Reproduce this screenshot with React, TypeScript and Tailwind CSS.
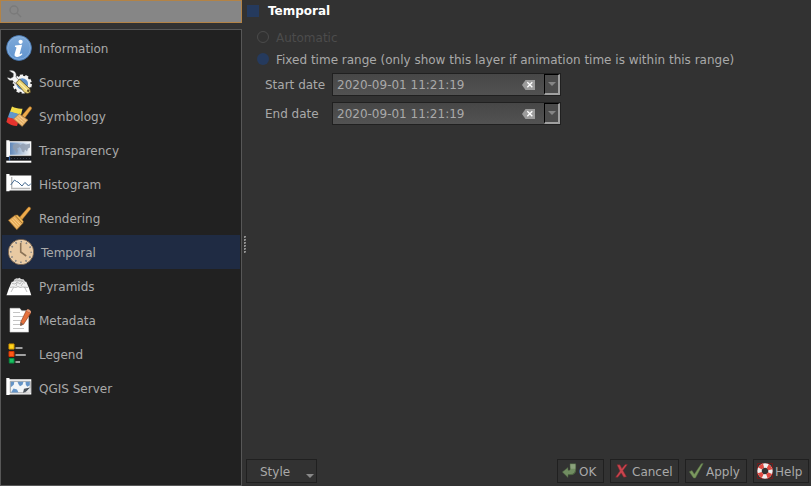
import React from "react";

function InfoIcon() {
  return (
    <svg width="26" height="26" viewBox="0 0 26 26">
      <defs>
        <linearGradient id="info" x1="0" y1="0" x2="0" y2="1">
          <stop offset="0" stopColor="#80abd9" />
          <stop offset="1" stopColor="#5f93cf" />
        </linearGradient>
      </defs>
      <circle cx="13" cy="13" r="12.4" fill="url(#info)" stroke="#4a79b3" strokeWidth="0.9" />
      <circle cx="13" cy="13" r="11.3" fill="none" stroke="#8fb6e0" strokeWidth="0.7" />
      <circle cx="14.600" cy="6.800" r="2.1" fill="#fff" />
      <path d="M9.200 10.600l6.900-.9-2.400 9c-.2 1 .8.6 2.200-.4l.5 1c-2 2.100-4 2.900-5.700 2.700-1.900-.2-2.500-1.500-2-3.200l1.700-5.800c.2-1-.4-1.100-1.600-1.100z" fill="#fff" />
    </svg>
  );
}

function SourceIcon() {
  return (
    <svg width="26" height="26" viewBox="0 0 26 26">
      <circle cx="16.300" cy="15" r="7" fill="#5c8fc8" stroke="#f5f5f5" strokeWidth="2.400" />
      <circle cx="16.300" cy="15" r="8.400" fill="none" stroke="#f5f5f5" strokeWidth="2.400" strokeDasharray="3.200 2.078" />
      <path d="M3 1.700c3-1.300 6.700.4 7.200 3.400.2 1.300 0 2.300-.3 3l4.500 4.300-3.500 3.600-4.500-4.400C4 12.300 1.500 10.600 1.200 8.200l3.400 1.100 2.500-1.500.2-3.200z" fill="#f6f6f6" stroke="#363636" strokeWidth="0.5" />
      <path d="M10 13.800l3.600-3.700 10.200 9.600.7 3.600-2.900 1.300-2.600-.8z" fill="#ead476" stroke="#584923" strokeWidth="0.8" />
      <path d="M13.200 13.600l7.800 7.500" stroke="#fff0ad" strokeWidth="1.200" />
      <circle cx="22.200" cy="21.800" r="1.200" fill="#51441f" />
    </svg>
  );
}

function SymbologyIcon() {
  return (
    <svg width="26" height="26" viewBox="0 0 26 26">
      <path d="M6 3.500c3.500 1.500 6 2.500 10.500 2.200L15 12 4 9z" fill="#f3dc4a" />
      <path d="M4 8.500l10.500 3-2 6L1.800 14.500z" fill="#5f97cd" />
      <path d="M1.800 14.200l11 3-1.800 5.800c-4 0-7.500-1.500-10.600-4z" fill="#e6332d" />
      <path d="M16 12.500L23 4.200c1.300-1.300 3.500.2 2.400 1.900l-6.600 8.800z" fill="#eeab4b" stroke="#a46b22" strokeWidth="0.5" />
      <path d="M7.500 16l5.700-5.300 8.800 6.300-5.800 6.500z" fill="#e9b36a" stroke="#9d7038" strokeWidth="0.5" />
      <path d="M9.500 15.500l7 6M11.300 14l7 5.800M13 12.500l7 5.600" stroke="#fad79a" strokeWidth="0.8" />
    </svg>
  );
}

function RenderingIcon() {
  return (
    <svg width="26" height="26" viewBox="0 0 26 26">
      <path d="M13.400 12.400L22 2.600c1.300-1.400 3.400.3 2.300 1.900l-8.300 10.300z" fill="#eeab4b" stroke="#a46b22" strokeWidth="0.5" />
      <path d="M2.300 15.300L9 10.200l7.700 8.300-5.900 6.300z" fill="#e8ad5a" stroke="#8c5f24" strokeWidth="0.6" />
      <path d="M9 10.200l2.400-.2c2.200 1.800 4.600 4.200 6 6.500l-.7 2z" fill="#f6bd5c" stroke="#9b6a28" strokeWidth="0.5" />
      <path d="M4.500 15.300l6.600 7.300M6.200 13.900l6.700 7.300M8 12.600l6.700 7.200" stroke="#f9d08a" strokeWidth="0.8" />
    </svg>
  );
}

function TransparencyIcon() {
  return (
    <svg width="26" height="26" viewBox="0 0 26 26">
      <defs>
        <linearGradient id="fade">
          <stop offset="0" stopColor="#6087b8" />
          <stop offset="1" stopColor="#f1f4f7" />
        </linearGradient>
      </defs>
      <path d="M.3 3.300h3.200v1h21.800v14.400H3.500v1.800H.3z" fill="#fafafa" />
      <path d="M4 5.400h20.300v12.400H4z" fill="url(#fade)" />
      <path d="M7 8l4-1.500 3 1-1 3-2 1 1 2-1 3-2-3-2-2zM14 8l3-1.500 3 1 4-1v4l-2 1-1 3-2-2-1 3-2-1-1-3-2-2z" fill="#8f9caf" opacity=".85" />
      <path d="M0 20h25.300v3H0z" fill="#14171d" />
      <path d="M3.500 19.500v4" stroke="#2e5fa8" strokeWidth="1.300" />
      <path d="M5 21.500h19" stroke="#38404b" strokeDasharray="1 2" />
      <path d="M.3 23.700h25v2H.3z" fill="#fff" />
    </svg>
  );
}

function HistogramIcon() {
  return (
    <svg width="26" height="26" viewBox="0 0 26 26">
      <path d="M.3 3h3.200v1.500h21.800v15H3.500v.8H.3z" fill="#fff" />
      <path d="M5.700 6v12M5 17.500h19" fill="none" stroke="#b8b8b8" strokeWidth="1.400" />
      <path d="M4.700 14L8.500 9l2 1.500 1.500.5 4 4 2.800-3.500 2 1.500 1.700 2L25 12.500" fill="none" stroke="#44698f" strokeWidth="1" />
    </svg>
  );
}

function TemporalIcon() {
  return (
    <svg width="28" height="28" viewBox="0 0 28 28">
      <circle cx="14" cy="14" r="12.600" fill="#e8c9a2" stroke="#776350" strokeWidth="1" />
      <circle cx="14" cy="14" r="11.600" fill="none" stroke="#f4d9b6" strokeWidth="0.8" />
      <circle cx="14" cy="14" r="10.300" fill="none" stroke="#7d7f82" strokeWidth="1.700" strokeDasharray="1.500 3.893" strokeDashoffset="0.750" />
      <path d="M13.700 5V14l5.500 4" fill="none" stroke="#8a7357" strokeWidth="1.600" />
    </svg>
  );
}

function PyramidsIcon() {
  return (
    <svg width="26" height="26" viewBox="0 0 26 26">
      <path d="M3.400 14h19.200l2.700 8.200H.5z" fill="#fff" />
      <path d="M5.700 8.700h14.600l2.300 5.600H3.400z" fill="#f1f1f1" />
      <path d="M8.500 6.300l2-1 1.500.2 1.500-.8L15 6l2.500.2 2 2.800H7z" fill="#d9d9d9" />
      <path d="M3.500 14.500l3.500-.5 3 .5 2-1 2 1 2.500-.5 6 .5M6 10.500l3 .5 2-2 3 2 2-3 3 2.500M8.500 7.500l2.500-.5 3 1 3-1.500M5 19l2.500-4.500M21 19l-2.500-5M10 13l1-3M15 13l2-3" fill="none" stroke="#a4a4a4" strokeWidth="0.7" />
    </svg>
  );
}

function MetadataIcon() {
  return (
    <svg width="26" height="26" viewBox="0 0 26 26">
      <path d="M4 1.300h9.700l2 2.500h6.800v21.300H4z" fill="#fff" stroke="#ccc" strokeWidth="0.6" />
      <path d="M7 5.500h7M7 9.500h10M7 13.500h8M7 17.500h8M7 21.500h11" stroke="#bdbdbd" strokeWidth="0.9" />
      <path d="M20.300 3.500l4.300 2.700-7 11-3 1.300.2-3.500z" fill="#e6713d" stroke="#954422" strokeWidth="0.7" />
      <path d="M20.300 3.500l.8-1c1-.8 4.400 1.300 3.900 2.700l-.4 1z" fill="#e99c79" />
      <path d="M14.700 15.200l2.700 2-3 1.600z" fill="#6e5e54" />
    </svg>
  );
}

function LegendIcon() {
  return (
    <svg width="26" height="26" viewBox="0 0 26 26">
      <path d="M9.500 7h7M9.500 14h10.300M9.500 21H14" stroke="#a1a1a1" strokeWidth="2" />
      <path d="M3 3h5v5H3z" fill="#ffd51f" stroke="#d99c00" strokeWidth="1" />
      <path d="M3 10.500h5v5H3z" fill="#ff5a18" stroke="#d33400" strokeWidth="1" />
      <path d="M3.300 17.500H8V22H3.300z" fill="#18bf61" stroke="#0b8b41" strokeWidth="1" />
    </svg>
  );
}

function ServerIcon() {
  return (
    <svg width="26" height="26" viewBox="0 0 26 26">
      <path d="M.3 3h3.200v1.300h21.800v15.200H3.500v.5H.3z" fill="#fff" />
      <path d="M4.300 6.300h19.900v11.500H4.300z" fill="#f3f6f8" stroke="#8b8b8b" strokeWidth="0.8" />
      <path d="M4.800 6.700h3.500l-.5 3-3 2.500zM11.500 6.700h6l-1 3-2.500 1.500-1.500-2zM5 17.500l2.500-4 3.500 1 1.500 3zM19.500 6.700h4.300v3.500l-2.500 1.500-1.500-2z" fill="#6494c7" />
      <path d="M17 17.800l1-4 6-1.300-3.500 4z" fill="#4c545c" />
      <path d="M19.500 17.500l5-4.500v5z" fill="#e5e5e5" />
    </svg>
  );
}

const items = [
  { label: "Information", Icon: InfoIcon },
  { label: "Source", Icon: SourceIcon },
  { label: "Symbology", Icon: SymbologyIcon },
  { label: "Transparency", Icon: TransparencyIcon },
  { label: "Histogram", Icon: HistogramIcon },
  { label: "Rendering", Icon: RenderingIcon },
  { label: "Temporal", Icon: TemporalIcon, selected: true },
  { label: "Pyramids", Icon: PyramidsIcon },
  { label: "Metadata", Icon: MetadataIcon },
  { label: "Legend", Icon: LegendIcon },
  { label: "QGIS Server", Icon: ServerIcon },
];

function DateRow({ label }: { label: string }) {
  return (
    <div className="flex h-[23px] items-center">
      <span className="w-[67px]">{label}</span>
      <div className="flex h-full w-[229px] items-center border border-[#202020] bg-linear-to-b from-[#474747] to-[#525252] pl-1">
        <span className="flex-1">2020-09-01 11:21:19</span>
        <svg width="13" height="10" viewBox="0 0 13 10" className="mr-[9px] mt-px">
          <path d="M0 5l3.500-5H13v10H3.500z" fill="#9c9c9c" />
          <path d="M5.300 2.300l5 5M10.300 2.300l-5 5" stroke="#fff" strokeWidth="1.300" />
        </svg>
        <div className="flex h-[21px] w-4 items-center justify-center border-b-2 border-l border-r-2 border-t border-b-[#a0a0a0] border-l-black border-r-[#a0a0a0] border-t-black bg-[#4b4b4b]">
          <svg width="8" height="4" viewBox="0 0 8 4"><path d="M0 0h8L4 4z" fill="#858585" /></svg>
        </div>
      </div>
    </div>
  );
}

function DialogButton({ label, size, children }: { label: string; size: string; children: React.ReactNode }) {
  return (
    <button className={`flex h-6 items-center gap-[2px] border border-[#202020] bg-[#323232] ${size}`}>
      {children}
      <span className="pt-[2px]">{label}</span>
    </button>
  );
}

export default function App() {
  return (
    <div className="flex h-[486px] w-[811px] overflow-hidden bg-[#323232] font-['DejaVu_Sans',sans-serif] text-[12px] leading-[14px] whitespace-nowrap text-[#a9a9a9]">
      <aside className="flex w-[242px] shrink-0 flex-col gap-[6px]">
        <div className="h-[23px] shrink-0 border border-[#b38346] bg-[#868686] pl-2 pt-1">
          <svg width="13" height="13" viewBox="0 0 13 13" fill="none" stroke="#7a7a7a" strokeWidth="1.400">
            <circle cx="5" cy="5" r="4" /><path d="M8 8l4 4" />
          </svg>
        </div>
        <nav className="flex-1 border border-[#575757] bg-[#212121] p-px">
          {items.map(({ label, Icon, selected }) => (
            <div key={label} className={`flex h-[34px] items-center ${selected ? "gap-[6px] bg-[#1f2b43] pl-[5px]" : "gap-[7px] pl-1"}`}>
              <Icon />
              <span className="pt-px">{label}</span>
            </div>
          ))}
        </nav>
      </aside>

      <div className="flex w-1 shrink-0 flex-col items-start justify-center gap-px pt-[3px] pl-[2px]">
        {[0, 1, 2, 3, 4, 5].map((dot) => (
          <i key={dot} className="size-0.5 border-t border-l border-[#929292] bg-[#656565]" />
        ))}
      </div>

      <main className="flex min-w-0 flex-1 flex-col justify-between pb-[3px]">
        <section>
          <div className="flex h-[21px] items-center gap-[9px] pl-px">
            <span className="size-3 bg-[#253a5d]" />
            <span className="pt-px font-bold text-white">Temporal</span>
          </div>
          <div className="flex flex-col pl-[11px]">
            <div className="mt-[5px] flex h-[22px] items-center gap-[7px] text-[#4c4c4c]">
              <span className="size-3 rounded-full border border-[#4b4b4b]" />
              <span className="pt-[2px]">Automatic</span>
            </div>
            <div className="flex h-[22px] items-center gap-[7px]">
              <span className="size-3 rounded-full bg-[#253a5d]" />
              <span className="pt-px">Fixed time range (only show this layer if animation time is within this range)</span>
            </div>
          </div>
          <div className="mt-[3px] flex flex-col gap-[6px] pl-[19px]">
            <DateRow label="Start date" />
            <DateRow label="End date" />
          </div>
        </section>

        <footer className="flex justify-between pr-[2px]">
          <button className="flex h-6 w-[71px] items-center justify-between border border-[#202020] pr-[2px] pl-[13px]">
            <span className="pt-[2px]">Style</span>
            <svg width="8" height="4" viewBox="0 0 8 4" className="mt-[9px]"><path d="M0 0h8L4 4z" fill="#898989" /></svg>
          </button>
          <div className="flex gap-[6px]">
            <DialogButton label="OK" size="w-[47px] pl-1">
              <svg width="15" height="16" viewBox="0 0 15 16">
                <path d="M8 .8h5.700v6.200c0 3-2 4.800-5 4.800H6v2.700L.3 9 6 4.500v2.700h.9c.9 0 1.300-.5 1.300-1.500z" fill="#718d61" stroke="#4c6343" strokeWidth="0.5" />
                <path d="M8.400 1.200h4.900v4.500H8.700z" fill="#8ba27c" />
                <path d="M6 11.500h3c2.500 0 4.200-1.500 4.500-4" stroke="#4d6742" fill="none" />
              </svg>
            </DialogButton>
            <DialogButton label="Cancel" size="w-[69px] pl-1">
              <svg width="15" height="16" viewBox="0 0 15 16">
                <path d="M2 1.800h2.900l2 3.800 3.300-4.100h2.200L8 7.600l3.500 6.100-2.800.5-2.500-4.300-3.400 4.300H.5l4.400-6.300z" fill="#c9454e" stroke="#7e252c" strokeWidth="0.5" />
              </svg>
            </DialogButton>
            <DialogButton label="Apply" size="w-[62px] pl-[3px]">
              <svg width="15" height="16" viewBox="0 0 15 16">
                <path d="M.3 8.800l2.700-1.300 2.300 3.700L12.300.8l1.900-.3L6.400 15H4.600z" fill="#7b985f" stroke="#567044" strokeWidth="0.5" />
              </svg>
            </DialogButton>
            <DialogButton label="Help" size="w-[56px] pl-[3px]">
              <svg width="16" height="16" viewBox="0 0 16 16">
                <path d="M.5.500h15v15H.5z" fill="none" stroke="#7d1717" strokeWidth="0.8" />
                <circle cx="8" cy="8" r="5.500" fill="none" stroke="#f1f1f1" strokeWidth="4.400" />
                <circle cx="8" cy="8" r="5.500" fill="none" stroke="#e04a42" strokeWidth="4.400" strokeDasharray="4.320" strokeDashoffset="-2.160" />
              </svg>
            </DialogButton>
          </div>
        </footer>
      </main>
    </div>
  );
}
